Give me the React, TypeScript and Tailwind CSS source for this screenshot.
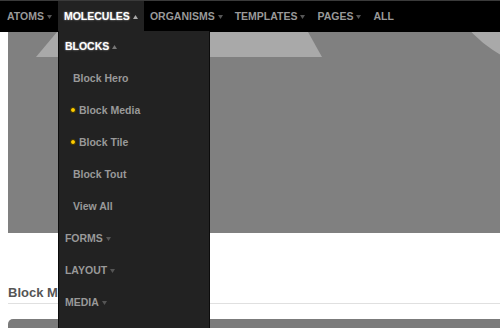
import React from 'react';

const font = "font-['Liberation_Sans',Helvetica,Arial,sans-serif]";

function Caret({ up = false, color = '#666' }: { up?: boolean; color?: string }) {
  return (
    <svg width="5" height="4" viewBox="0 0 5 4" className="shrink-0">
      {up ? <path d="M2.5 0 L5 4 L0 4 Z" fill={color} /> : <path d="M0 0 L5 0 L2.5 4 Z" fill={color} />}
    </svg>
  );
}

export default function App() {
  const navItems = ['ATOMS', 'MOLECULES', 'ORGANISMS', 'TEMPLATES', 'PAGES', 'ALL'];

  const blocks = [
    { label: 'Block Hero', dot: false },
    { label: 'Block Media', dot: true },
    { label: 'Block Tile', dot: true },
    { label: 'Block Tout', dot: false },
    { label: 'View All', dot: false },
  ];

  return (
    <div className={`relative h-screen overflow-hidden bg-white ${font}`}>
      {/* Top nav */}
      <nav className="relative z-10 flex h-[32px] border-t border-[#3a3a3a] bg-black pl-[1px]">
        {navItems.map(item => {
          const active = item === 'MOLECULES';
          return (
            <div
              key={item}
              className={`relative flex items-center gap-[3px] px-[6px] text-[10.5px] font-bold ${
                active ? 'bg-[#222] text-white' : 'text-[#999]'
              }`}
            >
              <span className={active ? '[text-shadow:0_0_2px_rgba(255,255,255,0.6)]' : ''}>{item}</span>
              {item !== 'ALL' && <Caret up={active} color={active ? '#aaa' : '#555'} />}

              {active && (
                <div className="absolute left-0 top-[30px] h-[400px] w-[152px] border-x border-[#0c0c0c] bg-[#222]">
                  <div className="flex h-[32px] items-center gap-[3px] pl-[6px] text-white">
                    <span className="[text-shadow:0_0_2px_rgba(255,255,255,0.6)]">BLOCKS</span>
                    <Caret up color="#777" />
                  </div>
                  {blocks.map(b => (
                    <div
                      key={b.label}
                      className={`flex h-[32px] items-center text-[10.5px] font-bold text-[#999] ${
                        b.dot ? 'pl-[11px]' : 'pl-[14px]'
                      }`}
                    >
                      {b.dot && (
                        <span className="mr-[3px] -mt-[2px] h-[6px] w-[6px] rounded-full border border-[#3a3000] bg-[#ffcc00]" />
                      )}
                      {b.label}
                    </div>
                  ))}
                  {['FORMS', 'LAYOUT', 'MEDIA'].map(s => (
                    <div key={s} className="flex h-[32px] items-center gap-[3px] pl-[6px] text-[#999]">
                      <span>{s}</span>
                      <Caret color="#555" />
                    </div>
                  ))}
                </div>
              )}
            </div>
          );
        })}
      </nav>

      {/* Page content */}
      <main className="pl-[8px]">
        <div className="h-[201px] w-full bg-[#808080]">
          <svg width="100%" height="201" viewBox="0 0 492 201" preserveAspectRatio="xMinYMin slice">
            <polygon points="49,0 300,0 314,25 28,25" fill="#a9a9a9" />
            <circle cx="548" cy="-78" r="115" fill="#a9a9a9" />
          </svg>
        </div>

        <h2 className="mt-[52px] border-b border-[#e0e0e0] pb-[2px] text-[13px] font-bold leading-[16px] text-[#555]">
          Block Media
        </h2>

        <div className="mt-[15px] h-[60px] rounded-tl-[5px] bg-[#7b7b7b]" />
      </main>
    </div>
  );
}
